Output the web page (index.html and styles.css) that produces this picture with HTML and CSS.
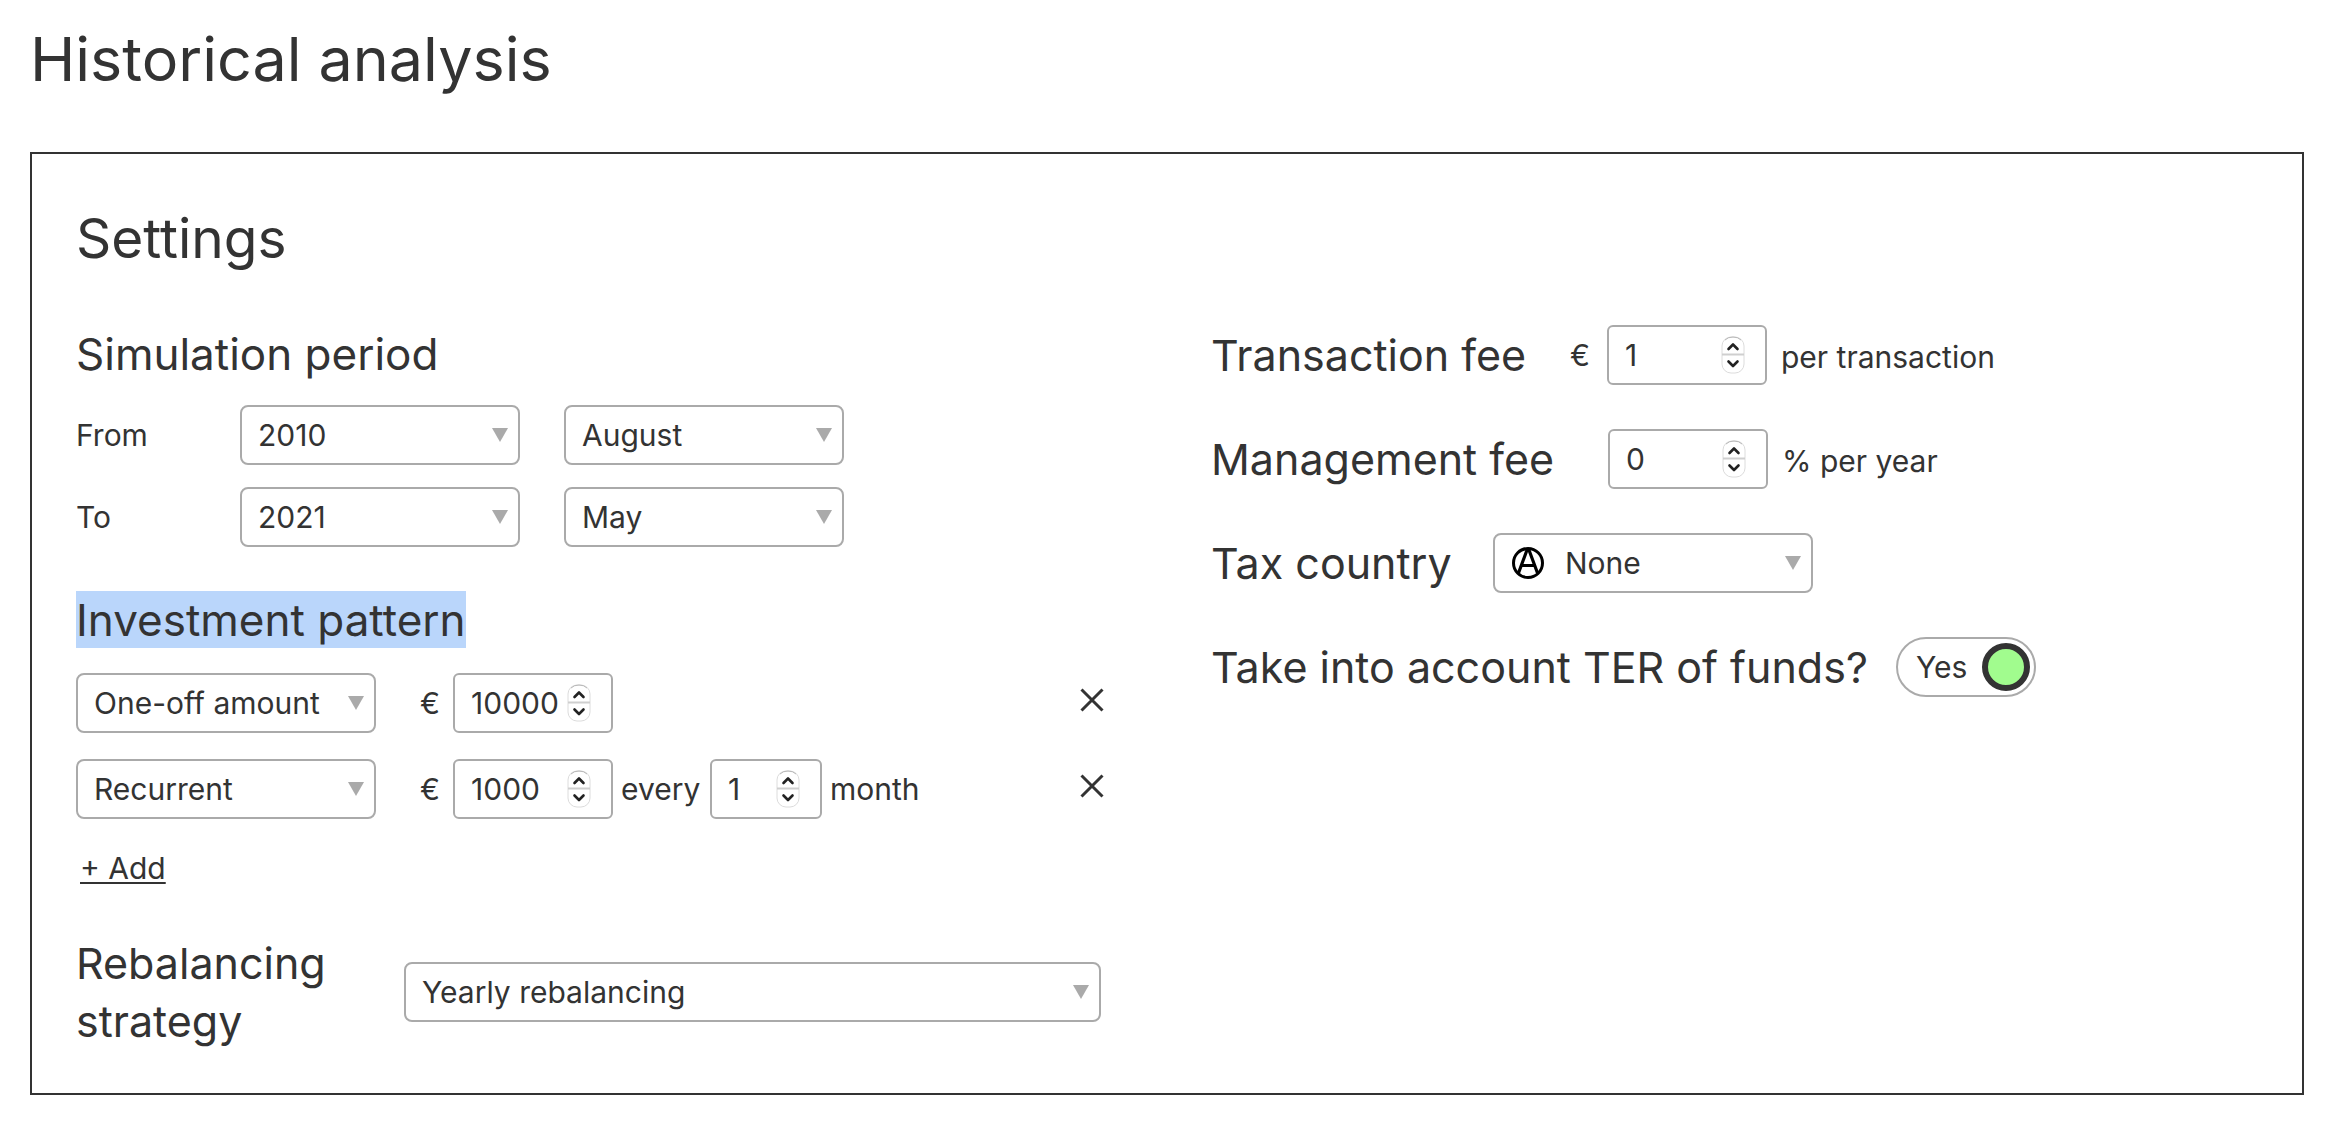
FILE: index.html
```html
<!DOCTYPE html>
<html lang="en">
<head>
<meta charset="utf-8">
<meta name="viewport" content="width=device-width, initial-scale=1">
<title>Historical analysis</title>
<link rel="stylesheet" href="styles.css">
</head>
<body>
<svg class="sprite" aria-hidden="true">
  <symbol id="stepper" viewBox="0 0 24 38">
    <rect x="1" y="1" width="22" height="36" rx="9" fill="#fff" stroke="#dcdcdc" stroke-width="1"/>
    <path d="M4 4 Q7 1 12 1 Q17 1 20 4" fill="none" stroke="#b8b8b8"/>
    <path d="M1 18.500H23" stroke="#cfcfcf" stroke-width="2"/>
    <path d="M7.500 13L12 8.500L16.500 13M7.500 25.500L12 30L16.500 25.500" fill="none" stroke="#222" stroke-width="2.600" stroke-linecap="round" stroke-linejoin="round"/>
  </symbol>
  <symbol id="cross" viewBox="0 0 24 24">
    <path d="M1.500 1.500L22.500 22.500M22.500 1.500L1.500 22.500" fill="none" stroke="#333" stroke-width="3"/>
  </symbol>
</svg>
<main class="page">
  <h1 class="page-title">Historical analysis</h1>
  <form class="panel">
    <h2 class="panel-title">Settings</h2>
    <div class="columns">
      <div class="column-left">
        <h3 class="heading">Simulation period</h3>
        <div class="period">
          <label for="from-year">From</label>
          <span class="select"><select id="from-year"><option>2010</option></select></span>
          <span class="select"><select aria-label="From month"><option>August</option></select></span>
          <label for="to-year">To</label>
          <span class="select"><select id="to-year"><option>2021</option></select></span>
          <span class="select"><select aria-label="To month"><option>May</option></select></span>
        </div>

        <h3 class="heading pattern-title"><mark>Investment pattern</mark></h3>
        <div class="patterns">
          <div class="pattern">
            <span class="select pattern-kind"><select aria-label="Type of investment"><option>One-off amount</option></select></span>
            <label class="currency" for="amount-1">€</label>
            <span class="number"><input id="amount-1" type="number" value="10000"><svg class="stepper"><use href="#stepper"/></svg></span>
            <button class="remove" type="button" aria-label="Remove"><svg><use href="#cross"/></svg></button>
          </div>
          <div class="pattern">
            <span class="select pattern-kind"><select aria-label="Type of investment"><option>Recurrent</option></select></span>
            <label class="currency" for="amount-2">€</label>
            <span class="number"><input id="amount-2" type="number" value="1000"><svg class="stepper"><use href="#stepper"/></svg></span>
            <label class="every" for="interval">every</label>
            <span class="number number-short"><input id="interval" type="number" value="1"><svg class="stepper"><use href="#stepper"/></svg></span>
            <span class="unit">month</span>
            <button class="remove" type="button" aria-label="Remove"><svg><use href="#cross"/></svg></button>
          </div>
        </div>
        <a class="add" href="#">+ Add</a>

        <div class="rebalancing">
          <label class="heading" for="rebalancing">Rebalancing strategy</label>
          <span class="select"><select id="rebalancing"><option>Yearly rebalancing</option></select></span>
        </div>
      </div>

      <div class="column-right">
        <div class="setting">
          <label class="heading label-transaction" for="transaction-fee">Transaction fee</label>
          <span class="currency">€</span>
          <span class="number"><input id="transaction-fee" type="number" value="1"><svg class="stepper"><use href="#stepper"/></svg></span>
          <span class="suffix">per transaction</span>
        </div>
        <div class="setting">
          <label class="heading label-management" for="management-fee">Management fee</label>
          <span class="number"><input id="management-fee" type="number" value="0"><svg class="stepper"><use href="#stepper"/></svg></span>
          <span class="suffix">% per year</span>
        </div>
        <div class="setting">
          <label class="heading label-tax" for="tax-country">Tax country</label>
          <span class="select country">
            <select id="tax-country"><option>None</option></select>
            <svg class="flag" viewBox="0 0 32 32" aria-hidden="true"><g fill="none" stroke="#000"><circle cx="16" cy="16" r="14.500" stroke-width="3"/><path d="M6.500 26L15 3H17L25.500 26M9 18.500H23.500" stroke-width="3.200"/></g></svg>
          </span>
        </div>
        <div class="setting">
          <label class="heading label-ter" for="ter">Take into account TER of funds?</label>
          <label class="toggle">Yes<input id="ter" type="checkbox" checked></label>
        </div>
      </div>
    </div>
  </form>
</main>
</body>
</html>
```
FILE: styles.css
```css
* {
  box-sizing: border-box;
}

body {
  margin: 0;
  background: #fff;
  color: #333;
  font: 30px/40px Inter, "Liberation Sans", sans-serif;
}

h1, h2, h3 {
  margin: 0;
  font-weight: 400;
}

.sprite {
  position: absolute;
  width: 0;
  height: 0;
}

.page {
  padding: 20px 28px 48px 30px;
}

.page-title {
  margin-bottom: 54px;
  font-size: 61px;
  line-height: 78px;
}

.panel {
  padding: 54px 44px 43px;
  border: 2px solid #333;
}

.panel-title {
  margin-bottom: 57px;
  font-size: 55px;
  line-height: 60px;
}

.columns {
  display: grid;
  grid-template-columns: 1fr 1fr;
  gap: 88px;
}

.column-left {
  padding-right: 19px;
}

.heading {
  font-size: 44px;
  line-height: 58px;
}

label.heading {
  font-size: 43px;
}

.heading mark {
  padding: 2px 0 1px;
  background: #bad6fb;
  color: inherit;
}

.select,
.number {
  position: relative;
  display: block;
  flex: none;
}

select,
input[type="number"] {
  display: block;
  width: 100%;
  height: 60px;
  margin: 0;
  padding: 0 16px;
  appearance: none;
  border: 2px solid #aaa;
  border-radius: 8px;
  background: #fff;
  color: #333;
  font: inherit;
}

input[type="number"] {
  appearance: textfield;
  border-radius: 6px;
}

input::-webkit-inner-spin-button {
  display: none;
}

.select::after {
  content: "";
  position: absolute;
  top: 23px;
  right: 12px;
  width: 16px;
  height: 14px;
  background: #aaa;
  clip-path: polygon(0 0, 100% 0, 50% 100%);
  pointer-events: none;
}

.number {
  width: 160px;
}

.number-short {
  width: 112px;
}

.stepper {
  position: absolute;
  top: 11px;
  right: 22px;
  width: 24px;
  height: 38px;
  pointer-events: none;
}

.period {
  display: grid;
  grid-template-columns: 120px 280px 280px;
  gap: 22px 44px;
  align-items: center;
  margin-top: 22px;
}

.pattern-title {
  margin: 44px 0 24px;
}

.patterns {
  display: grid;
  gap: 26px;
}

.pattern,
.setting {
  display: flex;
  align-items: center;
}

.pattern-kind {
  width: 300px;
  margin-right: 44px;
}

.currency {
  flex: none;
  width: 33px;
}

.every {
  width: 97px;
  padding-left: 8px;
}

.unit {
  padding-left: 8px;
}

.remove {
  width: 24px;
  height: 24px;
  margin: 0 0 6px auto;
  padding: 0;
  border: 0;
  background: none;
}

.remove svg {
  display: block;
  width: 24px;
  height: 24px;
}

.add {
  display: block;
  width: fit-content;
  margin: 29px 0 46px 4px;
  color: #333;
  text-decoration-thickness: 2px;
  text-underline-offset: 3px;
}

.rebalancing {
  display: grid;
  grid-template-columns: 284px 1fr;
  gap: 44px;
  align-items: center;
  padding-right: 3px;
}

.column-right {
  display: grid;
  align-content: start;
  gap: 44px;
}

.setting {
  height: 60px;
}

.setting .heading {
  flex: none;
}

.setting .currency {
  width: 37px;
}

.suffix {
  padding: 4px 0 0 14px;
}

.label-transaction {
  width: 359px;
}

.label-management {
  width: 397px;
}

.label-tax {
  width: 282px;
}

.label-ter {
  width: 685px;
}

.country {
  width: 320px;
}

.country select {
  padding-left: 70px;
}

.flag {
  position: absolute;
  top: 14px;
  left: 19px;
  width: 32px;
  height: 32px;
  pointer-events: none;
}

.toggle {
  display: flex;
  align-items: center;
  justify-content: space-between;
  width: 140px;
  height: 60px;
  padding: 0 4px 0 18px;
  border: 2px solid #aaa;
  border-radius: 30px;
}

.toggle input {
  width: 48px;
  height: 48px;
  margin: 0;
  appearance: none;
  border: 6px solid #333;
  border-radius: 50%;
  background: #fff;
}

.toggle input:checked {
  background: #a1fc8e;
}
```
